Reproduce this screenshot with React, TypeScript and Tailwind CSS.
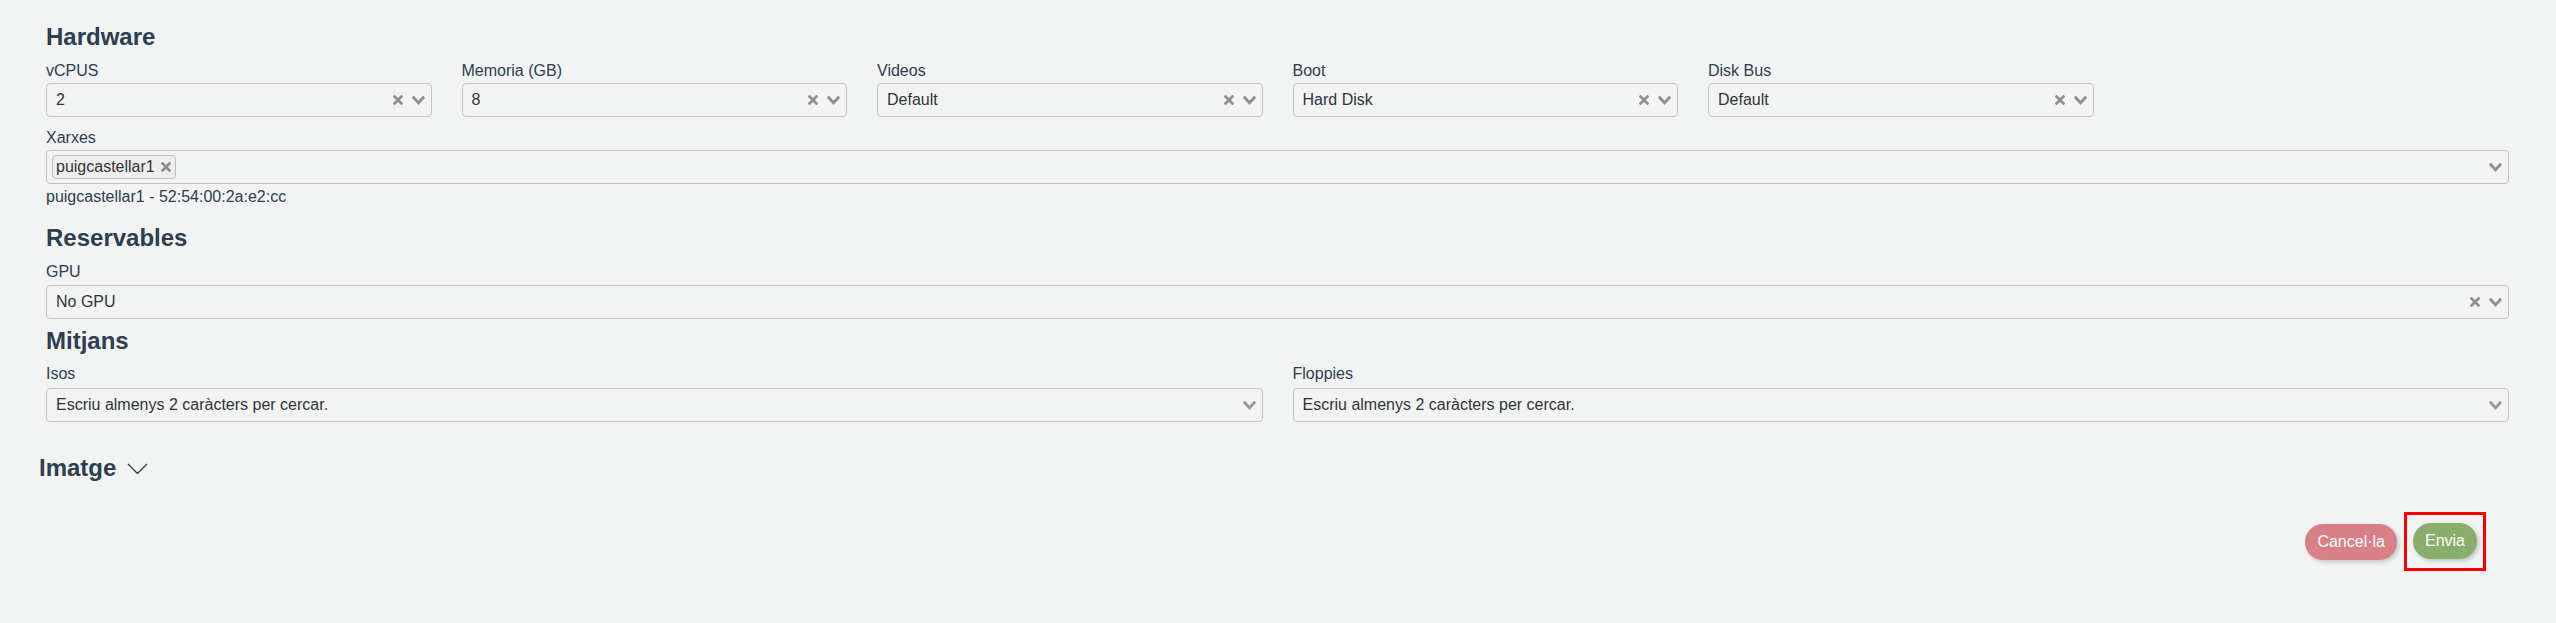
import React from 'react';

const ClearIcon = () => (
    <svg width="10" height="10" viewBox="0 0 10 10" className="fill-[#8f8f8f]">
        <path d="M6.895455 5l2.842897-2.842898c.348864-.348863.348864-.914488 0-1.263636L9.106534.261648c-.348864-.348864-.914489-.348864-1.263636 0L5 3.104545 2.157102.261648c-.348863-.348864-.914488-.348864-1.263636 0L.261648.893466c-.348864.348864-.348864.914489 0 1.263636L3.104545 5 .261648 7.842898c-.348864.348863-.348864.914488 0 1.263636l.631818.631818c.348864.348864.914773.348864 1.263636 0L5 6.895455l2.842898 2.842897c.348863.348864.914772.348864 1.263636 0l.631818-.631818c.348864-.348864.348864-.914489 0-1.263636L6.895455 5z" />
    </svg>
);

const OpenIcon = ({ light = false }: { light?: boolean }) => (
    <svg width="13" height="9" viewBox="0 0 14 10" className={light ? 'fill-[#9a9a9a]' : 'fill-[#8f8f8f]'}>
        <path d="M9.211364 7.59931l4.48338-4.867229c.407008-.441854.407008-1.158247 0-1.60046l-.73712-.80023c-.407008-.441854-1.066904-.441854-1.474243 0L7 5.198617 2.51662.33139c-.407008-.441853-1.066904-.441853-1.474243 0l-.737121.80023c-.407008.441854-.407008 1.158248 0 1.600461l4.48338 4.867228L7 10l2.211364-2.40069z" />
    </svg>
);

interface SelectProps {
    value?: string;
    clearable?: boolean;
    light?: boolean;
    children?: React.ReactNode;
}

function Select({ value, clearable = true, light = false, children }: SelectProps) {
    return (
        <div className="flex h-[34px] items-center rounded-[4px] border border-[#c3c3c3] pl-[9px] pr-[6px]">
            <div className="flex min-w-0 flex-1 items-center text-[#333]">{children ?? value}</div>
            {clearable && (
                <span className="mr-[9px] flex">
                    <ClearIcon />
                </span>
            )}
            <OpenIcon light={light} />
        </div>
    );
}

function Field({ label, children, gap = 'mt-[2px]' }: { label: string; children: React.ReactNode; gap?: string }) {
    return (
        <div>
            <div className="h-[20px] leading-[20px]">{label}</div>
            <div className={gap}>{children}</div>
        </div>
    );
}

export default function App() {
    const heading = 'text-[24px] font-bold leading-[28px] text-[#2c3e50]';

    return (
        <div className="min-h-screen bg-[#f2f3f3] font-['Liberation_Sans',Arial,sans-serif] text-[16px] text-[#2c3e50]">
            <div className="pl-[46px] pr-[47px] pt-[23px]">
                <h3 className={heading}>Hardware</h3>

                <div className="mt-[10px] grid grid-cols-6 gap-x-[30px]">
                    <Field label="vCPUS">
                        <Select value="2" />
                    </Field>
                    <Field label="Memoria (GB)">
                        <Select value="8" />
                    </Field>
                    <Field label="Videos">
                        <Select value="Default" />
                    </Field>
                    <Field label="Boot">
                        <Select value="Hard Disk" />
                    </Field>
                    <Field label="Disk Bus">
                        <Select value="Default" />
                    </Field>
                </div>

                <div className="mt-[11px]">
                    <Field label="Xarxes">
                        <div className="flex h-[34px] items-center rounded-[4px] border border-[#c3c3c3] pl-[5px] pr-[6px]">
                            <div className="flex flex-1 items-center">
                                <span className="flex h-[24px] items-center rounded-[4px] border border-[#bdbdbd] bg-[#eeeeee] pl-[3px] pr-[4px] leading-[22px] text-[#333]">
                                    puigcastellar1
                                    <span className="ml-[6px] flex">
                                        <ClearIcon />
                                    </span>
                                </span>
                            </div>
                            <OpenIcon />
                        </div>
                    </Field>
                </div>
                <div className="mt-[3px] leading-[20px]">puigcastellar1 - 52:54:00:2a:e2:cc</div>

                <h3 className={`mt-[17px] ${heading}`}>Reservables</h3>
                <div className="mt-[10px]">
                    <Field label="GPU" gap="mt-[3px]">
                        <Select value="No GPU" />
                    </Field>
                </div>

                <h3 className={`mt-[8px] ${heading}`}>Mitjans</h3>
                <div className="mt-[9px] grid grid-cols-2 gap-x-[30px]">
                    <Field label="Isos" gap="mt-[4px]">
                        <Select value="Escriu almenys 2 caràcters per cercar." clearable={false} light />
                    </Field>
                    <Field label="Floppies" gap="mt-[4px]">
                        <Select value="Escriu almenys 2 caràcters per cercar." clearable={false} light />
                    </Field>
                </div>

                <div className="-ml-[7px] mt-[32px] flex items-center">
                    <h4 className={heading}>Imatge</h4>
                    <svg width="21" height="11" viewBox="0 0 21 11" className="ml-[11px]" fill="none">
                        <path d="M1 1l9.5 9.5L20 1" stroke="#2c3e50" strokeWidth="1.4" />
                    </svg>
                </div>

                <div className="mt-[30px] flex items-center justify-end pr-[23px]">
                    <button className="mr-[7px] h-[36px] rounded-full bg-[#d98087] px-[12px] text-[16px] text-white shadow-[2px_2px_4px_rgba(0,0,0,0.2)]">
                        Cancel·la
                    </button>
                    <div className="border-[3px] border-[#ff0000] pb-[9px] pl-[6px] pr-[6px] pt-[8px]">
                        <button className="h-[36px] rounded-full bg-[#8aad6b] px-[12px] text-[16px] text-white shadow-[2px_2px_4px_rgba(0,0,0,0.2)]">
                            Envia
                        </button>
                    </div>
                </div>
            </div>
        </div>
    );
}
